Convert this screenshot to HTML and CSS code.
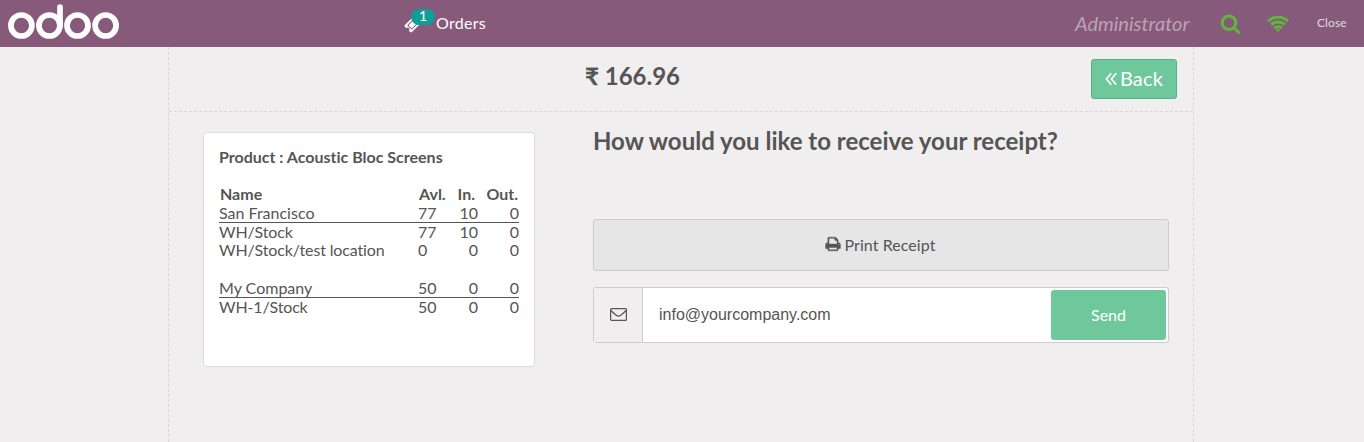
FILE: index.html
```
<!DOCTYPE html>
<html lang="en">
<head>
<meta charset="utf-8">
<title>Odoo POS</title>
<link rel="stylesheet" href="styles.css">
</head>
<body>
<header class="topbar">
  <svg class="logo" viewBox="0 0 120 47" fill="none" stroke="#fff" stroke-width="5.7" stroke-linecap="round">
    <circle cx="21.4" cy="25.500" r="10.5"/><circle cx="49.4" cy="25.500" r="10.5"/><circle cx="77.5" cy="25.500" r="10.5"/><circle cx="105.6" cy="25.500" r="10.5"/>
    <path d="M60 7V25.500"/>
  </svg>
  <div class="orders">
    <svg class="ticket" viewBox="0 0 1792 1792"><path fill="#fff" d="M1024 452l316 316-572 572-316-316zm-211 979l618-618q19-19 19-45t-19-45l-362-362q-18-18-45-18t-45 18L361 979q-19 19-19 45t19 45l362 362q18 18 45 18t45-18zm889-637l-907 908q-37 37-90.500 37t-90.500-37l-126-126q56-56 56-136t-56-136-136-56-136 56L91 1178q-37-37-37-90.500T91 997l907-906q37-37 90.500-37t90.500 37l125 125q-56 56-56 136t56 136 136 56 136-56l126 125q37 37 37 90.500t-37 90.500z"/></svg>
    <span class="badge">1</span>
    <span class="label">Orders</span>
  </div>
  <span class="user">Administrator</span>
  <svg class="search" viewBox="0 0 1792 1792"><path fill="#5EB937" d="M1216 832q0-185-131.500-316.500T768 384 451.500 515.500 320 832t131.500 316.500T768 1280t316.500-131.500T1216 832zm512 832q0 52-38 90t-90 38q-54 0-90-38l-343-342q-179 124-399 124-143 0-273.500-55.500t-225-150-150-225T64 832t55.500-273.500 150-225 225-150T768 128t273.500 55.500 225 150 150 225T1472 832q0 220-124 399l343 343q37 37 37 90z"/></svg>
  <svg class="wifi" viewBox="0 0 22 17" fill="none" stroke="#5EB937" stroke-width="2.900">
    <path d="M1.100 6.200a14 14 0 0 1 19.800 0M4.300 9.700a9.500 9.500 0 0 1 13.400 0M7.500 13.100a5 5 0 0 1 7 0"/>
    <path fill="#5EB937" stroke="none" d="M11 17 8.700 14.800q2.300-1.600 4.600 0z"/>
  </svg>
  <span class="close">Close</span>
</header>
<main class="screen">
  <div class="summary">
    <h1 class="total"><span class="rupee">₹</span> 166.96</h1>
    <button class="back"><svg class="chevrons" viewBox="0 0 12 14" fill="none" stroke="#fff" stroke-width="1.700"><path d="M6.300 1.300 1.400 7l4.900 5.700M11.300 1.300 6.400 7l4.900 5.700"/></svg><span class="label">Back</span></button>
  </div>
  <div class="content">
    <section class="card">
      <h2 class="product">Product : Acoustic Bloc Screens</h2>
      <div class="stock">
        <div class="row head"><span>Name</span><span>Avl.</span><span>In.</span><span>Out.</span></div>
        <div class="row place"><span>San Francisco</span><span>77</span><span>10</span><span>0</span></div>
        <div class="row"><span class="location">WH/Stock</span><span>77</span><span>10</span><span>0</span></div>
        <div class="row"><span class="location">WH/Stock/test location</span><span>0</span><span>0</span><span>0</span></div>
        <div class="row"></div>
        <div class="row place"><span>My Company</span><span>50</span><span>0</span><span>0</span></div>
        <div class="row"><span class="location">WH-1/Stock</span><span>50</span><span>0</span><span>0</span></div>
      </div>
    </section>
    <section class="receipt">
      <h2 class="question">How would you like to receive your receipt?</h2>
      <button class="print"><svg class="printer" viewBox="0 0 1792 1792"><path fill="#555" stroke="#555" stroke-width="50" d="M448 1536h896v-256H448v256zm0-640h896V512h-160q-40 0-68-28t-28-68V256H448v640zm1152 64q0-26-19-45t-45-19-45 19-19 45 19 45 45 19 45-19 19-45zm128 0v416q0 13-9.500 22.500t-22.500 9.500h-224v160q0 40-28 68t-68 28H416q-40 0-68-28t-28-68v-160H96q-13 0-22.500-9.500T64 1376V960q0-79 56.500-135.500T256 768h64V224q0-40 28-68t68-28h672q40 0 88 20t76 48l152 152q28 28 48 76t20 88v256h64q79 0 135.500 56.500T1728 960z"/></svg>Print Receipt</button>
      <div class="email">
        <span class="addon"><svg class="envelope" viewBox="0 0 17 13" fill="none" stroke="#555" stroke-width="1.200"><rect x=".6" y=".6" width="15.800" height="11.800" rx="1"/><path d="M1 2.500Q2.500 4.300 6.200 7.200q2.300 1.800 4.600 0Q14.500 4.300 16 2.500"/></svg></span>
        <span class="address">info@yourcompany.com</span>
        <button class="send">Send</button>
      </div>
    </section>
  </div>
</main>
</body>
</html>
```
FILE: styles.css
```
* { box-sizing: border-box; }
body {
  margin: 0;
  height: 442px;
  overflow: hidden;
  display: flex;
  flex-direction: column;
  background: #f0eeee;
  color: #555;
  font: 16px/19px Lato, "Liberation Sans", sans-serif;
  font-variant-ligatures: none;
}
h1, h2 { margin: 0; }
button { font: inherit; color: inherit; padding: 0; }
svg { display: block; flex: none; }

.topbar {
  height: 47px;
  flex: none;
  display: flex;
  align-items: center;
  background: #875a7b;
  color: #fff;
}
.logo { width: 120px; height: 47px; }
.orders {
  position: relative;
  display: flex;
  align-items: center;
  gap: 14px;
  margin-left: 284px;
  width: 100px;
}
.orders .label { padding-bottom: 2px; letter-spacing: .3px; }
.ticket { width: 18px; height: 18px; }
.badge {
  position: absolute;
  left: 7px;
  top: -4px;
  width: 24px;
  height: 16px;
  border-radius: 8px;
  background: #0f9d98;
  font-size: 14px;
  line-height: 14px;
  text-align: center;
}
.user {
  margin-left: 571px;
  width: 115px;
  font-size: 20px;
  font-style: italic;
  color: rgba(255, 255, 255, .45);
}
.search { width: 21px; height: 21px; margin-left: 30px; }
.wifi { width: 22px; height: 17px; margin-left: 26px; }
.close { margin-left: 28px; padding-bottom: 2px; font-size: 12px; letter-spacing: .1px; color: #ddd; }

.screen {
  flex: 1;
  width: 1026px;
  margin-left: 168px;
  border: dashed #d8d6d6;
  border-width: 0 1px;
}
.summary {
  height: 65px;
  display: flex;
  align-items: flex-start;
  justify-content: space-between;
  padding: 12px 16px 0 416px;
  border-bottom: 1px dashed #d8d6d6;
}
.total { font-size: 24px; line-height: 34px; }
.rupee { -webkit-text-stroke: .3px #555; }
.back {
  width: 86px;
  height: 40px;
  display: flex;
  align-items: center;
  justify-content: center;
  gap: 3px;
  border: 1px solid #5cae85;
  border-radius: 3px;
  background: #6ec89b;
  color: #fff;
  font-size: 20px;
}
.back .label { padding-bottom: 1px; letter-spacing: .2px; }
.chevrons { width: 12px; height: 14px; }

.content { display: flex; gap: 58px; padding: 20px 24px 0 34px; }
.card {
  width: 332px;
  height: 235px;
  padding: 14px 15px;
  border: 1px solid #dcdada;
  border-radius: 4px;
  background: #fff;
}
.product { font-size: 16px; line-height: 19px; }
.stock { margin-top: 19px; width: 300px; }
.row {
  display: grid;
  grid-template-columns: 199px 32px 28px 41px;
  height: 18.8px;
  line-height: 18px;
}
.row span:nth-child(n+3) { text-align: right; }
.location { letter-spacing: -.15px; }
.head { font-weight: bold; }
.head span { padding: 0 1px; }
.head span:nth-child(3) { padding-right: 3px; }
.place { border-bottom: 1px solid #555; }

.receipt { width: 576px; }
.question { font-size: 24px; line-height: 29px; margin-top: -6px; }
.print {
  width: 576px;
  height: 52px;
  margin-top: 64px;
  padding: 0 1px 2px 0;
  display: flex;
  align-items: center;
  justify-content: center;
  gap: 3px;
  border: 1px solid #ccc;
  border-radius: 3px;
  background: #e6e6e6;
  letter-spacing: .07px;
}
.printer { width: 16px; height: 16px; }
.email {
  height: 56px;
  margin-top: 16px;
  display: flex;
  align-items: stretch;
  border: 1px solid #ccc;
  border-radius: 3px;
  background: #fff;
}
.addon {
  width: 49px;
  padding-bottom: 2px;
  display: flex;
  align-items: center;
  justify-content: center;
  border-right: 1px solid #ccc;
  background: #f0eeee;
}
.envelope { width: 17px; height: 13px; }
.address { flex: 1; padding-left: 16px; line-height: 53px; font-family: "Liberation Sans", sans-serif; }
.send {
  width: 115px;
  margin: 2px;
  padding-bottom: 2px;
  border: 0;
  border-radius: 3px;
  background: #6ec89b;
  color: #fff;
}
```
